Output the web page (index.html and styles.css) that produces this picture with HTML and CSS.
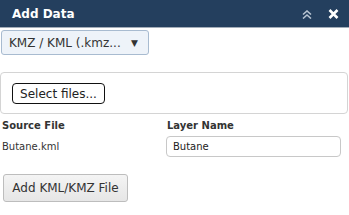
FILE: index.html
```html
<!DOCTYPE html>
<html>
<head>
<meta charset="utf-8">
<link rel="stylesheet" href="styles.css">
</head>
<body>
<div class="panel">
  <div class="header">
    <span class="title">Add Data</span>
    <span class="tools">
      <svg class="collapse" width="10" height="9" viewBox="0 0 10 9"><path d="M1 4.5 L5 1 L9 4.5 M1 8.5 L5 5 L9 8.5" fill="none" stroke="#b7c3d1" stroke-width="1.6"/></svg>
      <svg class="close" width="11" height="10" viewBox="0 0 11 10"><path d="M1.5 1 L9.5 9 M9.5 1 L1.5 9" fill="none" stroke="#ffffff" stroke-width="2.6"/></svg>
    </span>
  </div>
  <div class="body">
    <div class="select">
      <span class="select-text">KMZ / KML (.kmz...</span>
      <span class="caret">▼</span>
    </div>
    <div class="dropzone">
      <button class="pick">Select files...</button>
    </div>
    <div class="grid">
      <div class="lbl">Source File</div>
      <div class="lbl lbl2">Layer Name</div>
      <div class="src">Butane.kml</div>
      <div class="namecell"><div class="input">Butane</div></div>
    </div>
    <button class="add">Add KML/KMZ File</button>
  </div>
</div>
</body>
</html>
```
FILE: styles.css
```css
html, body { margin: 0; padding: 0; background: #ffffff; }
body { font-family: "DejaVu Sans", Verdana, sans-serif; color: #333333; }
.panel { width: 349px; }
.header {
  height: 27px;
  background: #243f5e;
  border-bottom: 1px solid #a3adb9;
  display: flex;
  align-items: center;
  justify-content: space-between;
  padding: 0 10px 0 12px;
}
.title { color: #ffffff; font-weight: bold; font-size: 12px; }
.tools { display: flex; align-items: center; gap: 16px; }
.collapse { display: block; margin-top: 1px; }
.close { display: block; }
.body { padding: 2px 1px 0 0; }
.select {
  margin-left: 1px;
  width: 146px;
  height: 23px;
  border: 1px solid #a8bbd0;
  border-radius: 3px;
  background: #eef3f9;
  display: flex;
  align-items: center;
  justify-content: space-between;
  padding: 0 10px 0 7px;
  box-sizing: border-box;
  width: 148px;
  height: 25px;
  font-size: 12px;
  color: #333;
}
.caret { font-size: 9px; color: #333; }
.dropzone {
  margin-top: 17px;
  height: 42px;
  border: 1px solid #d4d4d4;
  border-radius: 4px;
  display: flex;
  align-items: center;
  padding-left: 11px;
  box-sizing: border-box;
  width: 348px;
}
.pick {
  font-family: "DejaVu Sans", Verdana, sans-serif;
  font-size: 12px;
  color: #222;
  background: #ffffff;
  border: 1px solid #111;
  border-radius: 4px;
  height: 21px;
  width: 93px;
  padding: 0;
  margin-top: 1px;
}
.grid {
  display: grid;
  grid-template-columns: 164px 175px;
  padding-left: 2px;
  margin-top: 5px;
  row-gap: 3px;
  align-items: center;
}
.lbl { font-weight: bold; font-size: 10px; color: #333; line-height: 14px; }
.lbl2 { padding-left: 1px; }
.src { font-size: 10px; color: #333; }
.input {
  height: 21px;
  border: 1px solid #c8c8c8;
  border-radius: 4px;
  box-sizing: border-box;
  font-size: 10px;
  display: flex;
  align-items: center;
  padding-left: 6px;
  color: #222;
}
.add {
  margin: 17px 0 0 3px;
  width: 125px;
  height: 28px;
  font-family: "DejaVu Sans", Verdana, sans-serif;
  font-size: 12px;
  color: #333;
  background: linear-gradient(#f4f4f4, #e6e6e6);
  border: 1px solid #bdbdbd;
  border-radius: 3px;
  padding: 0;
}
```
